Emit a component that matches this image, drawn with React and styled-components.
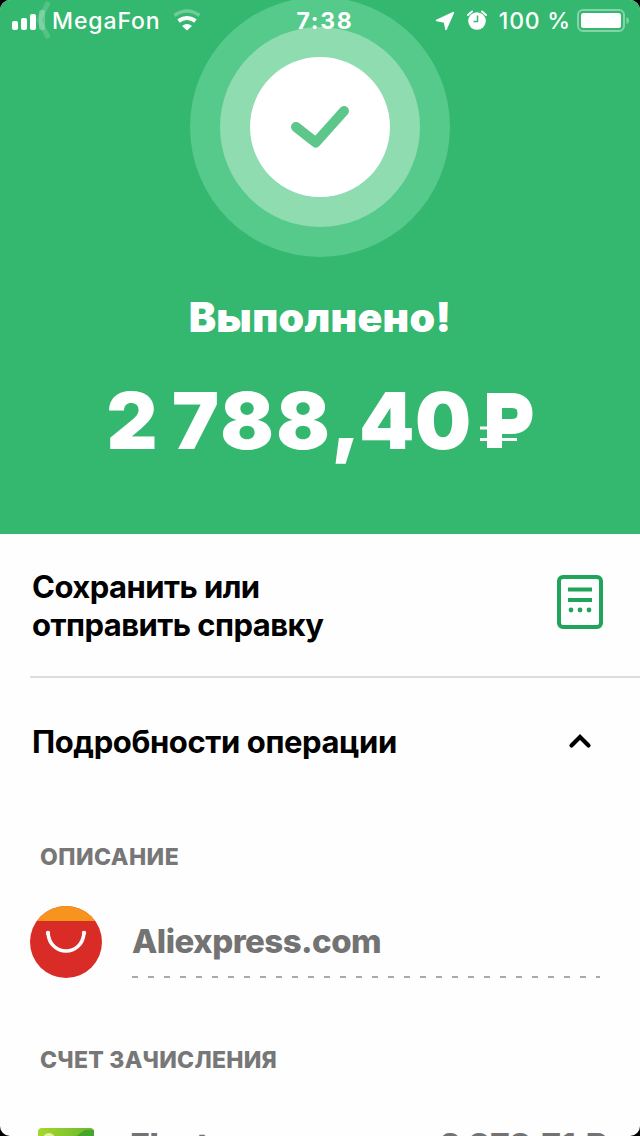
import React from "react";
import styled, { createGlobalStyle } from "styled-components";

function StatusBar() {
  return (
    <Status>
      <Carrier>
        <svg width="42" height="42" viewBox="0 0 42 42">
          <path d="M38.500 2L29 20L38.500 38" fill="none" stroke="#fff" strokeOpacity="0.16" strokeWidth="5" />
          <rect x="2" y="21" width="6" height="9" rx="2" fill="#fff" />
          <rect x="11" y="18" width="6" height="12" rx="2" fill="#fff" />
          <rect x="20" y="14" width="6" height="16" rx="2" fill="#fff" />
          <rect x="29" y="10" width="6" height="20" rx="2" fill="#fff" fillOpacity="0.25" />
        </svg>
        <StatusText $spacing="0.9px">MegaFon</StatusText>
        <svg width="28" height="42" viewBox="0 0 28 42">
          <path d="M1.500 15.500Q14 6.500 26.500 15.500" fill="none" stroke="#fff" strokeOpacity="0.3" strokeWidth="3.500" />
          <path d="M5.500 21Q14 15 22.500 21" fill="none" stroke="#fff" strokeWidth="4" />
          <path d="M9 26Q14 22 19 26L14 30.500Z" fill="#fff" />
        </svg>
      </Carrier>
      <Clock>7:38</Clock>
      <Indicators>
        <svg width="20" height="42" viewBox="0 0 20 42">
          <path d="M1.500 20.500L18.500 12.500L11 29.500L9.500 22Z" fill="#fff" stroke="#fff" strokeWidth="1.500" strokeLinejoin="round" />
        </svg>
        <svg width="20" height="42" viewBox="0 0 20 42">
          <circle cx="10" cy="21" r="8.800" fill="#fff" />
          <path d="M10.500 15.500V21.500H6.500" fill="none" stroke="#34b76f" strokeWidth="1.500" />
          <path d="M1 15L5 11.500M15 11.500L19 15" stroke="#fff" strokeWidth="2" strokeLinecap="round" />
        </svg>
        <StatusText $spacing="0.8px">100 %</StatusText>
        <svg width="54" height="42" viewBox="0 0 54 42">
          <rect x="1" y="10" width="46" height="21" rx="5" fill="none" stroke="#fff" strokeOpacity="0.4" strokeWidth="2" />
          <rect x="4" y="13" width="40" height="15" rx="2.500" fill="#fff" />
          <path d="M49.500 17Q52 18 52 20.500Q52 23 49.500 24Z" fill="#fff" fillOpacity="0.4" />
        </svg>
      </Indicators>
    </Status>
  );
}

function App() {
  return (
    <>
      <GlobalStyle />
      <Screen>
        <Hero>
          <StatusBar />
          <OuterRing>
            <InnerRing>
              <Badge>
                <svg width="60" height="46" viewBox="0 0 60 46">
                  <path d="M6 23L25.800 38.500L54 7" fill="none" stroke="#5dc68b" strokeWidth="10" strokeLinecap="round" strokeLinejoin="round" />
                </svg>
              </Badge>
            </InnerRing>
          </OuterRing>
          <Title>Выполнено!</Title>
          <Amount>
            <span>2</span>
            <Whole>788</Whole>
            <Comma>,</Comma>
            <span>40</span>
            <svg width="54" height="56" viewBox="0 0 54 56">
              <path d="M14.500 55V7.500H31Q45 7.500 45 20.500Q45 33.500 31 33.500H15" fill="none" stroke="#fff" strokeWidth="15" />
              <path d="M0 35H25M0 46.500H37" stroke="#fff" strokeWidth="3" />
            </svg>
          </Amount>
        </Hero>

        <SaveRow>
          <RowTitle $drop="8px" $spacing="-0.55px">
            Сохранить или
            <br />
            отправить справку
          </RowTitle>
          <svg width="46" height="54" viewBox="0 0 46 54">
            <rect x="2" y="2" width="42" height="50" rx="4" fill="none" stroke="#20a35a" strokeWidth="4" />
            <path d="M11 14.500H35M11 25H35" stroke="#20a35a" strokeWidth="4" />
            <g fill="#20a35a">
              <circle cx="14" cy="35" r="2.400" />
              <circle cx="23" cy="35" r="2.400" />
              <circle cx="32" cy="35" r="2.400" />
            </g>
          </svg>
        </SaveRow>

        <DetailsRow>
          <RowTitle $spacing="-0.4px">Подробности операции</RowTitle>
          <svg width="24" height="16" viewBox="0 0 24 16">
            <path d="M3.500 11.500L12 3L20.500 11.500" fill="none" stroke="#000" strokeWidth="4.200" strokeLinecap="round" />
          </svg>
        </DetailsRow>

        <Details>
          <Label>ОПИСАНИЕ</Label>
          <Merchant>
            <svg width="72" height="72" viewBox="0 0 72 72">
              <clipPath id="logo">
                <circle cx="36" cy="36" r="36" />
              </clipPath>
              <g clipPath="url(#logo)">
                <rect width="72" height="72" fill="#d92c27" />
                <rect width="72" height="15" fill="#f7941d" />
              </g>
              <path d="M18 27C20 51 52 51 54 27" fill="none" stroke="#fff" strokeWidth="3.500" strokeLinecap="round" />
              <circle cx="18" cy="27" r="2.200" fill="#fff" />
              <circle cx="54" cy="27" r="2.200" fill="#fff" />
            </svg>
            <MerchantName>Aliexpress.com</MerchantName>
          </Merchant>
          <Label $second>СЧЕТ ЗАЧИСЛЕНИЯ</Label>
          <Account>
            <svg width="56" height="40" viewBox="0 0 56 40">
              <defs>
                <linearGradient id="card">
                  <stop stopColor="#a7d62f" />
                  <stop offset="1" stopColor="#66b82e" />
                </linearGradient>
              </defs>
              <rect width="56" height="40" rx="4" fill="url(#card)" />
              <circle cx="11" cy="11" r="6" fill="#e2f39c" />
              <path d="M37 9L47 2H56V9Z" fill="#45a52d" />
            </svg>
            <AccountName>Electron</AccountName>
            <Balance>2 878,71 ₽</Balance>
          </Account>
        </Details>
      </Screen>
    </>
  );
}

export default App;

const GlobalStyle = createGlobalStyle`
  * {
    box-sizing: border-box;
  }

  body {
    margin: 0;
    background: #000;
    font-family: "Inter", sans-serif;
  }

  svg {
    display: block;
    flex-shrink: 0;
  }
`;

const Screen = styled.main`
  width: 640px;
  height: 1136px;
  overflow: hidden;
  border-radius: 10px;
  background: #fefefe;
`;

const Hero = styled.header`
  display: flex;
  flex-direction: column;
  align-items: center;
  height: 534px;
  background: #34b76f;
  color: #fff;
`;

const Status = styled.div`
  position: relative;
  z-index: 1;
  display: grid;
  grid-template-columns: 1fr auto 1fr;
  align-items: center;
  width: 100%;
  height: 42px;
  padding: 0 10px;
`;

const Carrier = styled.div`
  display: flex;
  align-items: center;

  svg:last-child {
    margin-left: 12px;
  }
`;

const StatusText = styled.span`
  font-size: 23px;
  font-weight: 500;
  letter-spacing: ${(props) => props.$spacing};
  white-space: nowrap;
`;

const Clock = styled.span`
  padding-left: 10px;
  font-size: 23px;
  font-weight: 700;
  letter-spacing: 1.7px;
`;

const Indicators = styled.div`
  display: flex;
  justify-content: flex-end;
  align-items: center;
  gap: 12px;

  svg:last-child {
    margin: 0 -1px 0 -6px;
  }
`;

const OuterRing = styled.div`
  display: flex;
  align-items: center;
  justify-content: center;
  width: 260px;
  height: 260px;
  margin-top: -45px;
  border-radius: 50%;
  background: #56ca8a;
`;

const InnerRing = styled.div`
  display: flex;
  align-items: center;
  justify-content: center;
  width: 200px;
  height: 200px;
  border-radius: 50%;
  background: #8edcaf;
`;

const Badge = styled.div`
  display: flex;
  align-items: center;
  justify-content: center;
  width: 140px;
  height: 140px;
  border-radius: 50%;
  background: #fff;
`;

const Title = styled.h1`
  margin: 35px 0 0;
  font-size: 41px;
  font-weight: 900;
  line-height: 50px;
  letter-spacing: 0.3px;
`;

const Amount = styled.div`
  display: flex;
  align-items: center;
  height: 96px;
  margin-top: 30px;
  font-size: 79px;
  font-weight: 900;
  line-height: 96px;
  letter-spacing: 0.4px;

  svg {
    margin: 2px 0 0 8px;
  }
`;

const Whole = styled.span`
  margin-left: 14px;
  letter-spacing: 2.4px;
`;

const Comma = styled.span`
  margin: -4px -2px 0 -1px;
`;

const SaveRow = styled.section`
  display: flex;
  align-items: center;
  justify-content: space-between;
  height: 144px;
  margin-left: 30px;
  padding: 0 37px 6px 2px;
  border-bottom: 2px solid #dcdcdc;
`;

const RowTitle = styled.h2`
  margin: 0;
  padding-top: ${(props) => props.$drop || "0"};
  font-size: 31px;
  font-weight: 700;
  line-height: 38px;
  letter-spacing: ${(props) => props.$spacing};
  color: #000;
`;

const DetailsRow = styled.section`
  display: flex;
  align-items: center;
  justify-content: space-between;
  height: 128px;
  padding: 0 48px 0 32px;
`;

const Details = styled.section`
  padding: 36px 40px 0 30px;
`;

const Label = styled.h3`
  margin: ${(props) => (props.$second ? "67px" : "0")} 0 0 10px;
  font-size: 23px;
  font-weight: 800;
  line-height: 30px;
  letter-spacing: ${(props) => (props.$second ? "0.25px" : "0.45px")};
  color: #777;
`;

const Merchant = styled.div`
  display: flex;
  gap: 30px;
  height: 72px;
  margin-top: 34px;
`;

const MerchantName = styled.div`
  flex: 1;
  height: 72px;
  font-size: 33px;
  font-weight: 800;
  line-height: 71px;
  letter-spacing: -0.55px;
  color: #737373;
  background: repeating-linear-gradient(90deg, #aaa 0 6px, transparent 6px 16px) 0 100% / 100% 2px no-repeat;
`;

const Account = styled.div`
  display: flex;
  margin: 53px -8px 0 8px;
`;

const AccountName = styled.span`
  flex: 1;
  margin-left: 36px;
  font-size: 33px;
  font-weight: 800;
  line-height: 34px;
  letter-spacing: -0.6px;
  color: #737373;
`;

const Balance = styled.span`
  font-size: 33px;
  font-weight: 800;
  line-height: 34px;
  letter-spacing: 0.1px;
  color: #737373;
`;
